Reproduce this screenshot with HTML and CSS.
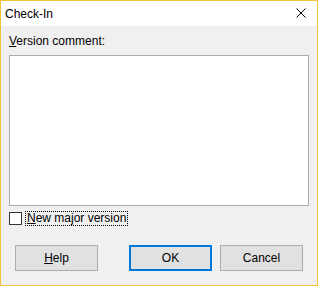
FILE: index.html
```html
<!DOCTYPE html>
<html lang="en">
  <head>
    <meta charset="UTF-8" />
    <title>Check-In</title>
    <link rel="stylesheet" href="styles.css">
  </head>
  <body>
    <div class="window">
      <div class="titlebar">
        <span class="title">Check-In</span>
        <svg class="close" width="10" height="10" viewBox="0 0 10 10">
          <path d="M0.5 0.5 L9.5 9.5 M9.5 0.5 L0.5 9.5" stroke="#000" stroke-width="1" fill="none" />
        </svg>
      </div>
      <div class="content">
        <div class="label"><u>V</u>ersion comment:</div>
        <div class="comment"></div>
        <div class="check-row">
          <span class="checkbox"></span>
          <span class="check-label"><u>N</u>ew major version</span>
        </div>
        <div class="buttons">
          <div class="btn help"><u>H</u>elp</div>
          <div class="btn ok">OK</div>
          <div class="btn cancel">Cancel</div>
        </div>
      </div>
    </div>
  </body>
</html>
```

FILE: styles.css
```css
body {
  margin: 0;
  padding: 0;
  font-family: "Liberation Sans", Arial, sans-serif;
  font-size: 12px;
  color: #000;
}
.window {
  width: 318px;
  height: 286px;
  box-sizing: border-box;
  border: 1px solid #f0c33a;
  background-color: #f0f0f0;
}
.titlebar {
  height: 25px;
  background-color: #fff;
  display: flex;
  align-items: center;
  justify-content: space-between;
  padding: 0 11px 0 4px;
}
.title {
  font-size: 12px;
}
.close {
  display: block;
  margin-top: -1px;
}
.content {
  padding: 7px 0 0 8px;
}
.label {
  line-height: 16px;
  height: 16px;
  margin-bottom: 6px;
}
.comment {
  width: 300px;
  height: 151px;
  box-sizing: border-box;
  background-color: #fff;
  border: 1px solid #abadb3;
}
.check-row {
  display: flex;
  align-items: center;
  margin-top: 5px;
  height: 15px;
}
.checkbox {
  width: 13px;
  height: 13px;
  box-sizing: border-box;
  border: 1px solid #333;
  background-color: #fff;
}
.check-label {
  margin-left: 3px;
  border: 1px dotted #000;
  line-height: 13px;
  padding: 0 1px;
}
.buttons {
  display: flex;
  margin-top: 19px;
  margin-left: 6px;
}
.btn {
  width: 83px;
  height: 26px;
  box-sizing: border-box;
  border: 1px solid #adadad;
  background-color: #e1e1e1;
  display: flex;
  align-items: center;
  justify-content: center;
}
.ok {
  margin-left: 31px;
  border: 2px solid #0078d7;
}
.cancel {
  margin-left: 8px;
}
```
